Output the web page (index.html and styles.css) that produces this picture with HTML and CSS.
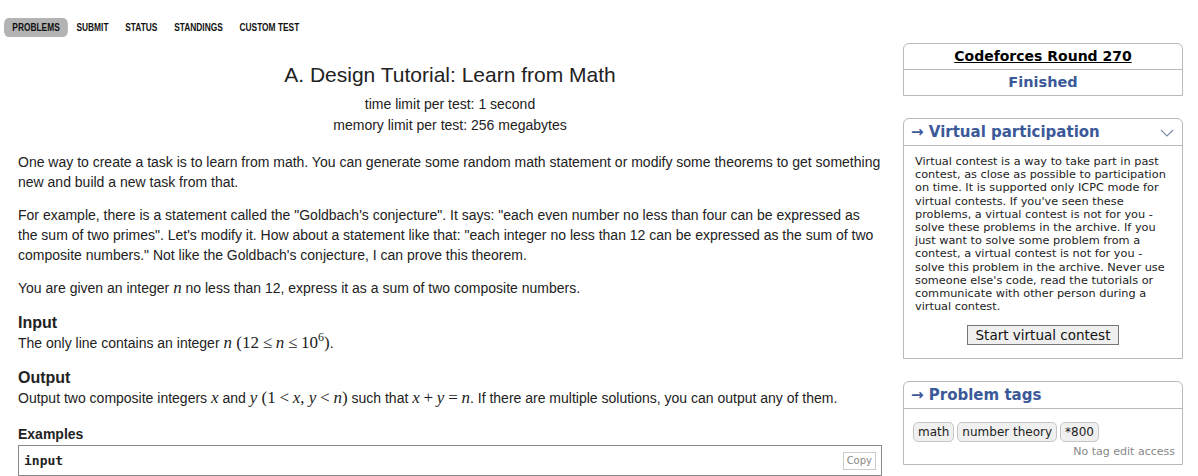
FILE: index.html
```html
<!DOCTYPE html>
<html>
<head>
<meta charset="utf-8">
<link rel="stylesheet" href="styles.css">
</head>
<body>
<nav class="nav">
  <a class="nav-item active">PROBLEMS</a>
  <a class="nav-item">SUBMIT</a>
  <a class="nav-item">STATUS</a>
  <a class="nav-item">STANDINGS</a>
  <a class="nav-item">CUSTOM TEST</a>
</nav>
<div class="layout">
  <main class="main">
    <div class="header">
      <div class="title">A. Design Tutorial: Learn from Math</div>
      <div class="prop">time limit per test: 1 second</div>
      <div class="prop">memory limit per test: 256 megabytes</div>
    </div>
    <p class="para">One way to create a task is to learn from math. You can generate some random math statement or modify some theorems to get something new and build a new task from that.</p>
    <p class="para">For example, there is a statement called the "Goldbach's conjecture". It says: "each even number no less than four can be expressed as the sum of two primes". Let's modify it. How about a statement like that: "each integer no less than 12 can be expressed as the sum of two composite numbers." Not like the Goldbach's conjecture, I can prove this theorem.</p>
    <p class="para">You are given an integer <span class="mi">n</span> no less than 12, express it as a sum of two composite numbers.</p>
    <div class="section">
      <div class="sec-title">Input</div>
      <div class="sec-text">The only line contains an integer <span class="m"><span class="mi">n</span> (12 <span class="mo">≤</span> <span class="mi">n</span> <span class="mo">≤</span> 10<sup>6</sup>)</span>.</div>
    </div>
    <div class="section">
      <div class="sec-title">Output</div>
      <div class="sec-text">Output two composite integers <span class="mi">x</span> and <span class="m"><span class="mi">y</span> (1 <span class="mo">&lt;</span> <span class="mi">x</span>, <span class="mi">y</span> <span class="mo">&lt;</span> <span class="mi">n</span>)</span> such that <span class="m"><span class="mi">x</span> <span class="mo">+</span> <span class="mi">y</span> <span class="mo">=</span> <span class="mi">n</span></span>. If there are multiple solutions, you can output any of them.</div>
    </div>
    <div class="examples-title">Examples</div>
    <div class="example">
      <div class="example-head">
        <span class="example-label">input</span>
        <span class="copy">Copy</span>
      </div>
    </div>
  </main>
  <aside class="sidebar">
    <div class="box">
      <div class="box-row"><a class="round-link">Codeforces Round 270</a></div>
      <div class="box-row last"><span class="finished">Finished</span></div>
    </div>
    <div class="box">
      <div class="box-caption">
        <span>→ Virtual participation</span>
        <svg class="chev" width="14" height="8" viewBox="0 0 14 8"><path d="M1 1 L7 7 L13 1" fill="none" stroke="#7a8aa8" stroke-width="1.1"/></svg>
      </div>
      <div class="box-body">
        <p class="virt-text">Virtual contest is a way to take part in past contest, as close as possible to participation on time. It is supported only ICPC mode for virtual contests. If you've seen these problems, a virtual contest is not for you - solve these problems in the archive. If you just want to solve some problem from a contest, a virtual contest is not for you - solve this problem in the archive. Never use someone else's code, read the tutorials or communicate with other person during a virtual contest.</p>
        <div class="btn-wrap"><button class="btn">Start virtual contest</button></div>
      </div>
    </div>
    <div class="box">
      <div class="box-caption"><span>→ Problem tags</span></div>
      <div class="box-body tags-body">
        <div class="tags">
          <span class="tag">math</span>
          <span class="tag">number theory</span>
          <span class="tag">*800</span>
        </div>
        <div class="no-edit">No tag edit access</div>
      </div>
    </div>
  </aside>
</div>
</body>
</html>
```

FILE: styles.css
```css
html, body {
  margin: 0;
  padding: 0;
  background: #fff;
}
body {
  font-family: "Liberation Sans", Arial, sans-serif;
  color: #222;
  width: 1198px;
  height: 476px;
  overflow: hidden;
}
.nav {
  display: flex;
  align-items: center;
  margin: 18px 0 0 4px;
  height: 19px;
  transform: scaleX(0.76);
  transform-origin: left center;
}
.nav-item {
  font-family: "Liberation Sans", Arial, sans-serif;
  font-weight: bold;
  font-size: 11px;
  color: #111;
  padding: 0 11px;
  height: 19px;
  line-height: 19px;
  border-radius: 6px;
}
.nav-item.active {
  background: #b3b3b3;
}
.layout {
  display: flex;
  padding: 6px 15px 0 18px;
  gap: 21px;
}
.main {
  width: 864px;
  flex: none;
  padding-top: 20px;
}
.header {
  text-align: center;
  margin-bottom: 16px;
}
.title {
  font-size: 21px;
  line-height: 24px;
  margin-bottom: 7px;
}
.prop {
  font-size: 14px;
  line-height: 21px;
}
.para {
  font-size: 14px;
  line-height: 20px;
  margin: 0 0 13px 0;
}
.mi {
  font-family: "Liberation Serif", "Times New Roman", serif;
  font-style: italic;
  font-size: 17px;
}
.m {
  font-family: "Liberation Serif", "Times New Roman", serif;
  font-size: 17px;
}
.mo {
  font-family: "Liberation Serif", serif;
  font-size: 17px;
  margin: 0 -0.5px;
}
.m sup {
  font-size: 12px;
  line-height: 0;
}
.section {
  margin-top: 16px;
  margin-bottom: 0;
}
.section + .section {
  margin-top: 15px;
}
.sec-title {
  font-weight: bold;
  font-size: 16px;
  line-height: 18px;
}
.sec-text {
  font-size: 14px;
  line-height: 22px;
}
.examples-title {
  font-weight: bold;
  font-size: 14px;
  line-height: 18px;
  margin-top: 16px;
  margin-bottom: 2px;
}
.example {
  border: 1px solid #888;
  border-bottom: none;
  height: 40px;
}
.example-head {
  display: flex;
  justify-content: space-between;
  align-items: center;
  border-bottom: 1px solid #888;
  height: 29px;
  padding: 0 5px;
}
.example-label {
  font-family: "DejaVu Sans Mono", "Liberation Mono", monospace;
  font-weight: bold;
  font-size: 13px;
}
.copy {
  font-family: "DejaVu Sans", sans-serif;
  font-size: 10px;
  color: #888;
  border: 1px solid #ccc;
  padding: 1px 3px;
  line-height: 14px;
}
.sidebar {
  width: 280px;
  flex: none;
  font-family: "DejaVu Sans", Verdana, sans-serif;
}
.box {
  border: 1px solid #b9b9b9;
  border-radius: 6px 6px 0 0;
  margin-bottom: 22px;
  background: #fff;
}
.box-row {
  text-align: center;
  border-bottom: 1px solid #b9b9b9;
  height: 25px;
  line-height: 25px;
  font-weight: bold;
  font-size: 14px;
}
.box-row.last {
  border-bottom: none;
}
.round-link {
  color: #000;
  text-decoration: underline;
}
.finished {
  color: #3b5998;
  font-size: 14.5px;
}
.box-caption {
  display: flex;
  justify-content: space-between;
  align-items: center;
  height: 26px;
  padding: 0 8px 0 7px;
  border-bottom: 1px solid #b9b9b9;
  color: #3b5998;
  font-weight: bold;
  font-size: 15px;
}
.chev {
  margin-top: 2px;
}
.box-body {
  padding: 9px 11px 13px 11px;
}
.virt-text {
  font-size: 11.3px;
  line-height: 13.2px;
  margin: 0 0 12px 0;
  color: #222;
}
.btn-wrap {
  text-align: center;
}
.btn {
  font-family: "DejaVu Sans", Verdana, sans-serif;
  font-size: 13.5px;
  background: #efefef;
  border: 1px solid #767676;
  padding: 1px 8px;
  height: 20px;
  line-height: 16px;
  color: #111;
  border-radius: 0;
}
.tags-body {
  padding: 13px 7px 6px 9px;
}
.tags {
  display: flex;
  gap: 3px;
}
.tag {
  font-size: 12px;
  background: #f0f0f0;
  border: 1px solid #c6c6c6;
  border-radius: 5px;
  padding: 0 4px;
  line-height: 18px;
  color: #222;
}
.no-edit {
  text-align: right;
  font-size: 11px;
  color: #888;
  margin-top: 3px;
}
```
